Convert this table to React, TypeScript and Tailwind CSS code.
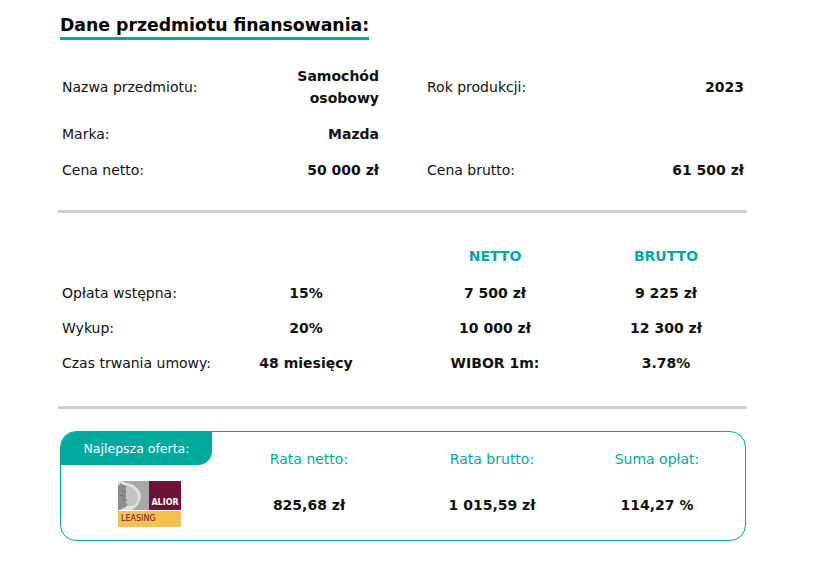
import React from 'react';

const font = { fontFamily: '"DejaVu Sans", Verdana, sans-serif' };

function AliorLogo() {
  return (
    <div className="flex w-[63px] flex-col">
      <div className="flex h-[29px]">
        <div className="relative w-[31px] overflow-hidden bg-[#d9d9d9]">
          <svg viewBox="0 0 31 29" className="absolute inset-0 h-full w-full">
            <rect width="31" height="29" fill="#e2e2e2" />
            <path d="M4 0 C10 3 14 2 18 6 C22 10 24 14 22 19 C21 23 18 26 14 29 L31 29 L31 0 Z" fill="#a8a8a8" />
            <path d="M0 4 C6 2 10 6 13 9 C16 12 16 17 13 21 C10 25 6 27 2 29 L0 29 Z" fill="#8e8e8e" />
            <path d="M9 5 C14 5 19 9 20 15 C21 21 17 25 12 25 C8 24 7 20 8 15 C8 10 7 7 9 5 Z" fill="#c4c4c4" />
            <path d="M2 2 L6 6 M3 9 L8 11 M1 14 L6 15 M5 19 L9 19" stroke="#6e6e6e" strokeWidth="1" />
          </svg>
        </div>
        <div className="flex flex-1 items-end justify-center bg-[#6e1238] pb-[3px]">
          <span className="text-[8px] font-bold leading-none text-white" style={font}>ALIOR</span>
        </div>
      </div>
      <div className="mt-[1px] flex h-[16px] items-center bg-[#f5c04f] pl-[3px]">
        <span className="text-[8px] leading-none text-[#6e1238]" style={font}>LEASING</span>
      </div>
    </div>
  );
}

function InfoRow({ l1, v1, l2, v2 }: { l1: string; v1: React.ReactNode; l2?: string; v2?: string }) {
  return (
    <div className="grid grid-cols-[172px_147px_46px_172px_147px] items-center">
      <span className="pl-[2px]">{l1}</span>
      <span className="text-right font-bold leading-[22px]">{v1}</span>
      <span />
      <span className="pl-[2px]">{l2}</span>
      <span className="text-right font-bold">{v2}</span>
    </div>
  );
}

function FeeRow({ label, a, b, c, head }: { label: string; a: string; b: string; c: string; head?: boolean }) {
  return (
    <div className="grid grid-cols-[148px_196px_182px_160px] items-center leading-[21px]">
      <span className="whitespace-nowrap pl-[2px]">{label}</span>
      <span className="text-center font-bold">{a}</span>
      <span className={`text-center font-bold ${head ? 'text-[#00a99d]' : ''}`}>{b}</span>
      <span className={`text-center font-bold ${head ? 'text-[#00a99d]' : ''}`}>{c}</span>
    </div>
  );
}

export default function App() {
  return (
    <div className="min-h-[561px] w-[814px] bg-white text-[14px] leading-[21px] text-[#111]" style={font}>
      <div className="ml-[60px] w-[686px] pt-[13px]">
        <h2 className="inline-block border-b-[3px] border-[#00a99d] text-[17.3px] font-bold leading-[24px] text-black">
          Dane przedmiotu finansowania:
        </h2>

        <div className="mt-[25px] flex flex-col gap-[14px]">
          <InfoRow
            l1="Nazwa przedmiotu:"
            v1={<>Samochód<br />osobowy</>}
            l2="Rok produkcji:"
            v2="2023"
          />
          <InfoRow l1="Marka:" v1="Mazda" />
          <InfoRow l1="Cena netto:" v1="50 000 zł" l2="Cena brutto:" v2="61 500 zł" />
        </div>

        <div className="mt-[29px] h-[3px] w-[689px] -ml-[2px] bg-[#d0d0d0]" />

        <div className="mt-[33px] flex flex-col gap-[14px]">
          <div className="mb-[2px]">
            <FeeRow label="" a="" b="NETTO" c="BRUTTO" head />
          </div>
          <FeeRow label="Opłata wstępna:" a="15%" b="7 500 zł" c="9 225 zł" />
          <FeeRow label="Wykup:" a="20%" b="10 000 zł" c="12 300 zł" />
          <FeeRow label="Czas trwania umowy:" a="48 miesięcy" b="WIBOR 1m:" c="3.78%" />
        </div>

        <div className="mt-[32px] h-[3px] w-[689px] -ml-[2px] bg-[#d0d0d0]" />

        <div className="mt-[22px] h-[110px] overflow-hidden rounded-[16px] border-[1.5px] border-[#00a99d]">
          <div className="grid grid-cols-[152px_192px_174px_156px]">
            <div className="flex flex-col items-start">
              <div className="flex h-[33px] w-[151px] items-center justify-center rounded-br-[14px] bg-[#00a99d] pb-[1px] text-[12.5px] text-white">
                Najlepsza oferta:
              </div>
              <div className="mt-[16px] flex w-full justify-start pl-[57px]">
                <AliorLogo />
              </div>
            </div>
            <div className="flex flex-col items-center pt-[17px]">
              <span className="text-[#00a99d]">Rata netto:</span>
              <span className="mt-[25px] font-bold">825,68 zł</span>
            </div>
            <div className="flex flex-col items-center pt-[17px]">
              <span className="text-[#00a99d]">Rata brutto:</span>
              <span className="mt-[25px] font-bold">1 015,59 zł</span>
            </div>
            <div className="flex flex-col items-center pt-[17px]">
              <span className="text-[#00a99d]">Suma opłat:</span>
              <span className="mt-[25px] font-bold">114,27 %</span>
            </div>
          </div>
        </div>
      </div>
    </div>
  );
}
